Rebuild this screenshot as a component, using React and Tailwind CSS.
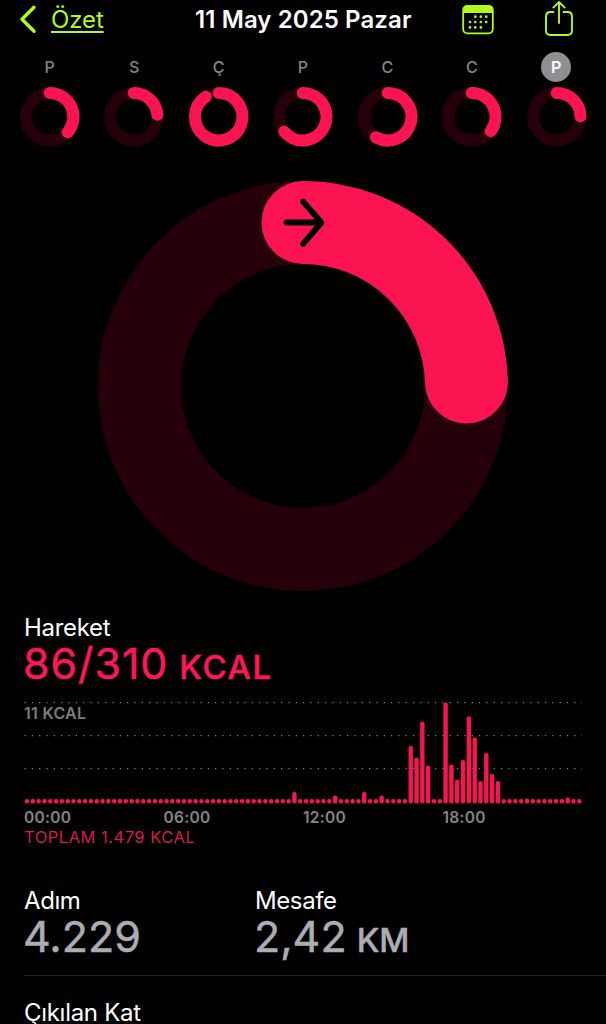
const days = [
  { label: "P", angle: 131 },
  { label: "S", angle: 85 },
  { label: "Ç", angle: 327 },
  { label: "P", angle: 231 },
  { label: "C", angle: 210 },
  { label: "C", angle: 127 },
  { label: "P", angle: 89, active: true },
];

// quarter-hour slots that rise above the resting dot
const peaks = {
  46: 11.5, 53: 8, 58: 11.5, 61: 8,
  66: 57.5, 67: 46, 68: 82, 69: 38,
  72: 101, 73: 39, 74: 24, 75: 43.5, 76: 87, 77: 66, 78: 22.5, 79: 50.5, 80: 29.5, 81: 22.5,
  86: 5, 93: 6,
};
const slots = Array.from({ length: 96 }, (_, i) => peaks[i] || 4.5);
const hours = ["00:00", "06:00", "12:00", "18:00"];

const Ring = ({ size, stroke, angle, children }) => {
  const c = size / 2;
  const r = (size - stroke) / 2;
  const rad = (angle * Math.PI) / 180;
  const x = c + r * Math.sin(rad);
  const y = c - r * Math.cos(rad);

  return (
    <svg width={size} height={size} viewBox={`0 0 ${size} ${size}`} fill="none" className="block shrink-0 overflow-visible">
      <circle cx={c} cy={c} r={r} stroke="#25000b" strokeWidth={stroke} />
      <path
        d={`M${c} ${c - r}A${r} ${r} 0 ${angle > 180 ? 1 : 0} 1 ${x} ${y}`}
        stroke="#fc1452"
        strokeWidth={stroke}
        strokeLinecap="round"
      />
      {children}
    </svg>
  );
};

const Header = () => (
  <header className="flex h-10 items-start text-[#b0fb1c]">
    <svg width="20" height="32" viewBox="0 0 20 32" fill="none" className="ml-[18px] mt-1 shrink-0">
      <path d="M16 3.2L4 15.2L16 27.2" stroke="currentColor" strokeWidth="3.4" strokeLinecap="round" strokeLinejoin="round" />
    </svg>
    <a className="ml-[13px] mt-1 w-[53px] whitespace-nowrap text-[24px] leading-8 tracking-[-0.1px] underline decoration-[1.5px] underline-offset-[3px]">Özet</a>
    <h1 className="ml-[91px] mt-1 w-[217px] whitespace-nowrap text-[24px] font-semibold leading-8 tracking-[0.1px] text-white">11 May 2025 Pazar</h1>
    <svg width="32" height="30" viewBox="0 0 32 30" fill="none" className="ml-[50px] mt-[5px] shrink-0">
      <rect x="1.2" y="1" width="29.6" height="27.3" rx="4" stroke="currentColor" strokeWidth="1.8" />
      <path d="M1 8V4.5Q1 .5 5 .5H27Q31 .5 31 4.5V8Z" fill="currentColor" />
      <path
        d="M13.3 11.7h.01M18.8 11.7h.01M24.2 11.7h.01M8 17h.01M13.3 17h.01M18.8 17h.01M24.2 17h.01M8 22.4h.01M13.3 22.4h.01M18.8 22.4h.01"
        stroke="currentColor"
        strokeWidth="2.7"
        strokeLinecap="round"
      />
    </svg>
    <svg width="30" height="38" viewBox="0 0 30 38" fill="none" className="ml-[50px] shrink-0">
      <path
        d="M9.5 12H6.5Q2 12 2 16.5V30.5Q2 35 6.5 35H23.5Q28 35 28 30.5V16.5Q28 12 23.5 12H19.5"
        stroke="currentColor"
        strokeWidth="1.9"
        strokeLinecap="round"
      />
      <path d="M15 23V2M9.3 7.6L15 2L20.7 7.6" stroke="currentColor" strokeWidth="1.9" strokeLinecap="round" strokeLinejoin="round" />
    </svg>
  </header>
);

const Week = () => (
  <div className="ml-[7.5px] mt-3 grid h-[95px] w-[591px] grid-cols-7">
    {days.map((day, i) => (
      <div key={i} className="flex flex-col items-center gap-[5px]">
        <span
          className={
            day.active
              ? "flex size-[30px] items-center justify-center rounded-full bg-[#8e8e93] text-[16px] font-semibold text-white"
              : "flex size-[30px] items-center justify-center text-[16px] font-medium text-[#858585]"
          }
        >
          {day.label}
        </span>
        <Ring size={59.5} stroke={12} angle={day.angle} />
      </div>
    ))}
  </div>
);

const Chart = () => (
  <section className="ml-6 mt-[13px] w-[558px]">
    <div className="relative h-[102px]">
      <svg width="560" height="102" viewBox="0 0 560 102" className="block">
        {[0.6, 33.6, 66.6].map((y) => (
          <path key={y} d={`M.5 ${y}H558`} stroke="#858585" strokeWidth="1.2" strokeDasharray="1.2 6.13" />
        ))}
        {slots.map((h, i) => (
          <rect key={i} x={0.8 + i * 5.814} y={101.6 - h} width="4.4" height={h} rx="2" fill="#f51551" />
        ))}
      </svg>
      <span className="absolute left-0 top-px text-[16px] font-semibold leading-5 tracking-[0.3px] text-[#7c7c7c]">11 KCAL</span>
    </div>
    <div className="mt-1 grid grid-cols-4 text-[15.5px] font-semibold leading-5 tracking-[0.3px] text-[#858585]">
      {hours.map((hour) => (
        <span key={hour}>{hour}</span>
      ))}
    </div>
    <p className="text-[16.5px] leading-[19px] tracking-[0.5px] text-[#d41b4e]">TOPLAM 1.479 KCAL</p>
  </section>
);

const Stat = ({ label, value, unit }) => (
  <div>
    <p className="text-[24px] leading-7 tracking-[-0.4px]">{label}</p>
    <p className="-ml-px whitespace-nowrap text-[43px] leading-[43px] text-[#acacb2] [-webkit-text-stroke:0.5px_currentColor]">
      {value}
      {unit && <span className="ml-[10px] text-[33px] font-medium leading-none">{unit}</span>}
    </p>
  </div>
);

const App = () => {
  return (
    <main className="h-[1024px] w-[606px] overflow-hidden bg-black font-['Inter',sans-serif] text-white">
      <Header />
      <Week />
      <div className="ml-[98px] mt-[34px] h-[410px] w-[410px]">
        <Ring size={410} stroke={83} angle={88.6}>
          <path d="M188.5 41.5H223M205 20.5L223.5 41.5L205 63" stroke="#000" strokeWidth="5.8" strokeLinecap="round" strokeLinejoin="round" />
        </Ring>
      </div>
      <section className="ml-6 mt-[23px] h-[75px]">
        <h2 className="text-[24px] leading-7 tracking-[-0.3px]">Hareket</h2>
        <p className="-ml-px whitespace-nowrap text-[43px] leading-[43px] tracking-[0.9px] text-[#fc1759] [-webkit-text-stroke:0.5px_currentColor]">
          86/310<span className="ml-[11px] text-[33px] font-medium leading-none tracking-[1.6px]">KCAL</span>
        </p>
      </section>
      <Chart />
      <section className="ml-6 mt-10 grid h-[89px] grid-cols-[231px_1fr] border-b border-[#262626]">
        <Stat label="Adım" value="4.229" />
        <Stat label="Mesafe" value="2,42" unit="KM" />
      </section>
      <p className="ml-6 mt-[21px] text-[24px] leading-8 tracking-[-0.3px]">Çıkılan Kat</p>
    </main>
  );
};

export default App;
